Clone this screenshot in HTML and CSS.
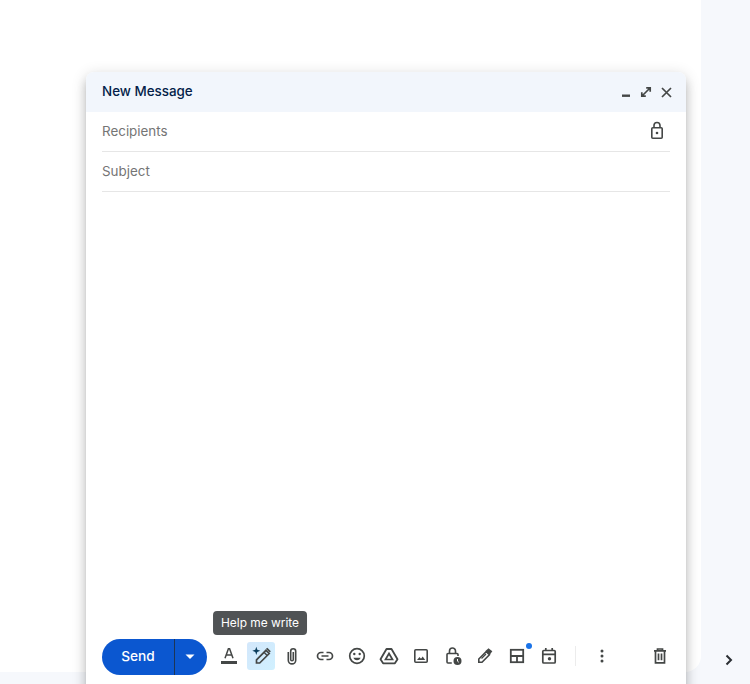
FILE: index.html
```html
<!DOCTYPE html>
<html lang="en">
<head>
<meta charset="utf-8">
<title>New Message</title>
<link rel="stylesheet" href="styles.css">
</head>
<body>
<div class="app">
  <main class="main"></main>
  <aside class="rail">
    <svg class="rail-chevron" width="24" height="24" viewBox="0 0 24 24"><path d="M9.500 7.500 14 12l-4.500 4.500" fill="none" stroke="#2b2f33" stroke-width="2"/></svg>
  </aside>
</div>
<section class="compose">
  <header class="compose-head">
    <span class="compose-title">New Message</span>
    <div class="head-icons">
      <svg width="20" height="20" viewBox="0 0 20 20"><path d="M6 13.700h8" stroke="#444746" stroke-width="2.400" fill="none"/></svg>
      <svg width="20" height="20" viewBox="0 0 20 20"><path d="M5.800 10.200v4h4M14.200 9.800v-4h-4M6 14l8-8" stroke="#444746" stroke-width="1.700" fill="none"/></svg>
      <svg width="20" height="20" viewBox="0 0 20 20"><path d="m6 6 9 9M15 6l-9 9" stroke="#444746" stroke-width="1.700" fill="none"/></svg>
    </div>
  </header>
  <div class="compose-body">
    <div class="field">
      <span>Recipients</span>
      <svg class="field-lock" width="24" height="24" viewBox="0 0 24 24"><rect x="6.800" y="8.800" width="10.400" height="10.400" rx="1" fill="none" stroke="#444746" stroke-width="1.600"/><path d="M9 8.800V6.500a3 3 0 0 1 6 0v2.300" fill="none" stroke="#444746" stroke-width="1.600"/><circle cx="12" cy="14" r="1.300" fill="#444746"/></svg>
    </div>
    <div class="field"><span>Subject</span></div>
    <div class="message"></div>
    <div class="toolbar">
      <div class="send">
        <span class="send-label">Send</span>
        <span class="send-more"><svg width="10" height="6" viewBox="0 0 10 6"><path d="M.500.500h9L5 5z" fill="#fff"/></svg></span>
      </div>
      <div class="tools">
        <span class="tool"><svg width="20" height="20" viewBox="0 0 20 20"><path d="M6 12.200 9.400 2.800h1.200l3.400 9.400M7.200 9h5.600" fill="none" stroke="#444746" stroke-width="1.500"/><rect x="2" y="15" width="16" height="3" fill="#444746"/></svg></span>
        <span class="tool tool-active"><svg width="22" height="22" viewBox="0 0 22 22"><path d="M6.500 18v-3.200L16 5.300 19.200 8.500 9.700 18z" fill="none" stroke="#444746" stroke-width="1.700"/><path d="M14 7.300l3.200 3.200" stroke="#444746" stroke-width="1.500" fill="none"/><path d="M16 3.800l1.300-1.100 3.500 3.500-1.100 1.300z" fill="#444746"/><path d="M6.300 1.700l1 3 3 1.100-3 1.100-1 3-1-3-3-1.100 3-1.100z" fill="#0b3d5c"/></svg><span class="tooltip">Help me write</span></span>
        <span class="tool"><svg width="20" height="20" viewBox="0 0 20 20"><path d="M5.300 6v8.200a3.700 3.700 0 0 0 7.400 0V5.300a2.500 2.500 0 0 0-5 0V13.500a1.300 1.300 0 0 0 2.600 0V6" fill="none" stroke="#444746" stroke-width="1.600"/></svg></span>
        <span class="tool"><svg width="20" height="20" viewBox="0 0 20 20"><path d="M8.500 6.500H6a3.500 3.500 0 0 0 0 7h2.500M11.500 6.500H14a3.500 3.500 0 0 1 0 7h-2.500M6.500 10h7" fill="none" stroke="#444746" stroke-width="1.700"/></svg></span>
        <span class="tool"><svg width="20" height="20" viewBox="0 0 20 20"><circle cx="10" cy="10" r="7.300" fill="none" stroke="#444746" stroke-width="1.700"/><circle cx="7.300" cy="8" r="1.200" fill="#444746"/><circle cx="12.700" cy="8" r="1.200" fill="#444746"/><path d="M6.300 11.700c.8 1.700 2.100 2.500 3.700 2.500s2.900-.8 3.700-2.500z" fill="#444746"/></svg></span>
        <span class="tool"><svg width="20" height="20" viewBox="0 0 20 20"><path d="M7.500 3h5l6 10.300-2.600 4H4.100l-2.600-4z" fill="none" stroke="#444746" stroke-width="1.800" stroke-linejoin="round"/><path d="M10 7.500 6.500 13.500h7z" fill="none" stroke="#444746" stroke-width="1.700"/></svg></span>
        <span class="tool"><svg width="20" height="20" viewBox="0 0 20 20"><rect x="3.800" y="3.800" width="12.400" height="12.400" rx="1" fill="none" stroke="#444746" stroke-width="1.600"/><path d="m6 14 2.500-3 1.500 1.700 1.700-2.200L14.200 14z" fill="#444746"/></svg></span>
        <span class="tool"><svg width="20" height="20" viewBox="0 0 20 20"><path d="M8.800 17H5a1 1 0 0 1-1-1V8.500a1 1 0 0 1 1-1h9a1 1 0 0 1 1 1v1.500" fill="none" stroke="#444746" stroke-width="1.600"/><path d="M6.500 7.500V5a3 3 0 0 1 6 0v2.500" fill="none" stroke="#444746" stroke-width="1.600"/><circle cx="14.500" cy="15" r="4" fill="#444746"/><path d="M14.500 13v2.200l1.300 1" fill="none" stroke="#fff" stroke-width="1"/></svg></span>
        <span class="tool"><svg width="20" height="20" viewBox="0 0 20 20"><path d="M3.800 16.200v-3.200l7.400-7.400 3.200 3.200-7.400 7.400z" fill="none" stroke="#444746" stroke-width="1.600"/><path d="M10.500 5l3-2.700 3.800 2.900-2.700 3.800z" fill="#444746"/><path d="m6.500 12.500 4.500-4.500" stroke="#444746" stroke-width="1.300"/></svg></span>
        <span class="tool"><svg width="20" height="20" viewBox="0 0 20 20"><rect x="3.800" y="3.800" width="12.400" height="12.400" fill="none" stroke="#444746" stroke-width="1.800"/><path d="M3.800 10h12.400M10 10v6.200" fill="none" stroke="#444746" stroke-width="1.800"/></svg><span class="dot"></span></span>
        <span class="tool"><svg width="20" height="20" viewBox="0 0 20 20"><rect x="3.800" y="4.500" width="12.400" height="12.500" rx="1" fill="none" stroke="#444746" stroke-width="1.700"/><path d="M3.800 8.300h12.400M6.800 2v3M13.200 2v3" fill="none" stroke="#444746" stroke-width="1.700"/><circle cx="10.500" cy="12.700" r="1.700" fill="#444746"/></svg></span>
      </div>
      <span class="divider"></span>
      <span class="tool tool-more"><svg width="20" height="20" viewBox="0 0 20 20"><circle cx="10" cy="5" r="1.500" fill="#444746"/><circle cx="10" cy="10" r="1.500" fill="#444746"/><circle cx="10" cy="15" r="1.500" fill="#444746"/></svg></span>
      <span class="tool tool-trash"><svg width="20" height="20" viewBox="0 0 20 20"><path d="M4 4.800h12M7.500 4.500V3h5v1.500M5.500 4.800v12h9v-12M8.500 7.500v6.800M11.500 7.500v6.800" fill="none" stroke="#444746" stroke-width="1.700"/></svg></span>
    </div>
  </div>
</section>
</body>
</html>
```

FILE: styles.css
```css
* { box-sizing: border-box; }
html, body { margin: 0; height: 100%; overflow: hidden; }
body {
  background: #f6f8fc;
  font-family: Inter, "Liberation Sans", sans-serif;
  position: relative;
}
.app { display: flex; height: 684px; }
.main {
  width: 701px;
  height: 672px;
  background: #fff;
  border-bottom-right-radius: 16px;
}
.rail {
  flex: 1;
  display: flex;
  justify-content: center;
  align-items: flex-end;
  padding: 0 0 12px 7px;
}
.rail-chevron { display: block; }
.compose {
  position: absolute;
  left: 86px;
  top: 72px;
  width: 600px;
  height: 640px;
  background: #fff;
  border-radius: 8px 8px 0 0;
  box-shadow: 0 8px 10px 1px rgba(0,0,0,.14), 0 3px 14px 2px rgba(0,0,0,.12), 0 5px 5px -3px rgba(0,0,0,.2);
  display: flex;
  flex-direction: column;
}
.compose-head {
  height: 40px;
  flex: none;
  background: #f2f6fc;
  border-radius: 8px 8px 0 0;
  display: flex;
  align-items: center;
  justify-content: space-between;
  padding: 0 10px 0 16px;
}
.compose-title {
  font-size: 13.4px;
  font-weight: 500;
  color: #041e49;
  margin-bottom: 2px;
}
.head-icons { display: flex; }
.head-icons svg { display: block; }
.compose-body {
  flex: 1;
  display: flex;
  flex-direction: column;
  padding: 0 16px;
}
.field {
  height: 40px;
  flex: none;
  border-bottom: 1px solid #e6e6e6;
  display: flex;
  align-items: center;
  justify-content: space-between;
  font-size: 13.4px;
  color: #757575;
  padding: 0 1px 2px 0;
}
.field svg { display: block; }
.message { height: 447px; flex: none; }
.toolbar { display: flex; align-items: center; height: 36px; flex: none; }
.send {
  width: 105px;
  height: 36px;
  background: #0b57d0;
  border-radius: 18px;
  display: flex;
  color: #fff;
  font-size: 13.7px;
  font-weight: 500;
  flex: none;
}
.send-label {
  width: 73px;
  display: flex;
  align-items: center;
  justify-content: center;
  border-right: 1px solid #1d3557;
  padding: 0 0 3px 0;
}
.send-more { flex: 1; display: flex; align-items: center; justify-content: center; padding-right: 2px; }
.tools { display: flex; gap: 4px; margin: 0 0 2px 8px; }
.tool {
  position: relative;
  width: 28px;
  height: 28px;
  flex: none;
  display: flex;
  align-items: center;
  justify-content: center;
}
.tool svg { display: block; }
.tool-active { background: linear-gradient(135deg, #d3e7fb, #d0f0ff); border-radius: 3px; }
.tooltip {
  position: absolute;
  left: 50%;
  transform: translateX(calc(-50% - 1px));
  bottom: 35px;
  height: 24px;
  padding: 0 8px;
  background: #505355;
  color: #fff;
  border-radius: 4px;
  font-size: 11.9px;
  line-height: 23px;
  white-space: nowrap;
}
.dot {
  position: absolute;
  top: 1px;
  right: -1px;
  width: 6px;
  height: 6px;
  border-radius: 50%;
  background: #1a73e8;
}
.divider { width: 1px; height: 20px; background: #ececec; margin: 0 12px 2px; flex: none; }
.tool-more { margin-bottom: 2px; }
.tool-trash { margin: 0 -4px 2px auto; }
```
